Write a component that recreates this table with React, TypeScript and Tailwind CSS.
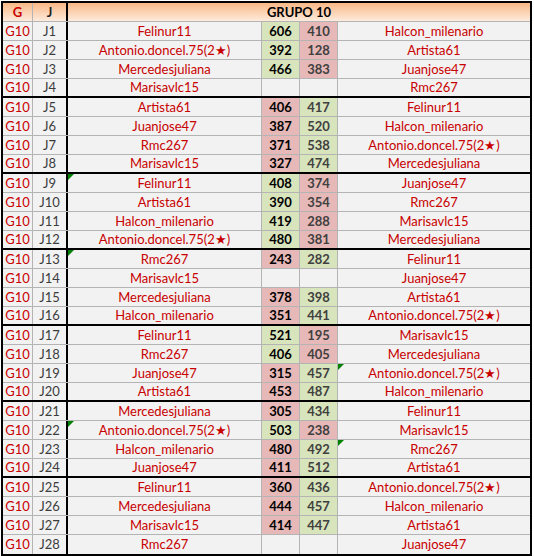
type Row = {
  j: string
  a: string
  s1?: number
  s2?: number
  b: string
  markA?: boolean
  markB?: boolean
}

const rows: Row[] = [
  { j: 'J1', a: 'Felinur11', s1: 606, s2: 410, b: 'Halcon_milenario' },
  { j: 'J2', a: 'Antonio.doncel.75(2★)', s1: 392, s2: 128, b: 'Artista61' },
  { j: 'J3', a: 'Mercedesjuliana', s1: 466, s2: 383, b: 'Juanjose47' },
  { j: 'J4', a: 'Marisavlc15', b: 'Rmc267' },
  { j: 'J5', a: 'Artista61', s1: 406, s2: 417, b: 'Felinur11' },
  { j: 'J6', a: 'Juanjose47', s1: 387, s2: 520, b: 'Halcon_milenario' },
  { j: 'J7', a: 'Rmc267', s1: 371, s2: 538, b: 'Antonio.doncel.75(2★)' },
  { j: 'J8', a: 'Marisavlc15', s1: 327, s2: 474, b: 'Mercedesjuliana' },
  { j: 'J9', a: 'Felinur11', s1: 408, s2: 374, b: 'Juanjose47', markA: true },
  { j: 'J10', a: 'Artista61', s1: 390, s2: 354, b: 'Rmc267' },
  { j: 'J11', a: 'Halcon_milenario', s1: 419, s2: 288, b: 'Marisavlc15' },
  { j: 'J12', a: 'Antonio.doncel.75(2★)', s1: 480, s2: 381, b: 'Mercedesjuliana' },
  { j: 'J13', a: 'Rmc267', s1: 243, s2: 282, b: 'Felinur11', markA: true },
  { j: 'J14', a: 'Marisavlc15', b: 'Juanjose47' },
  { j: 'J15', a: 'Mercedesjuliana', s1: 378, s2: 398, b: 'Artista61' },
  { j: 'J16', a: 'Halcon_milenario', s1: 351, s2: 441, b: 'Antonio.doncel.75(2★)' },
  { j: 'J17', a: 'Felinur11', s1: 521, s2: 195, b: 'Marisavlc15' },
  { j: 'J18', a: 'Rmc267', s1: 406, s2: 405, b: 'Mercedesjuliana' },
  { j: 'J19', a: 'Juanjose47', s1: 315, s2: 457, b: 'Antonio.doncel.75(2★)', markB: true },
  { j: 'J20', a: 'Artista61', s1: 453, s2: 487, b: 'Halcon_milenario' },
  { j: 'J21', a: 'Mercedesjuliana', s1: 305, s2: 434, b: 'Felinur11' },
  { j: 'J22', a: 'Antonio.doncel.75(2★)', s1: 503, s2: 238, b: 'Marisavlc15', markA: true },
  { j: 'J23', a: 'Halcon_milenario', s1: 480, s2: 492, b: 'Rmc267', markB: true },
  { j: 'J24', a: 'Juanjose47', s1: 411, s2: 512, b: 'Artista61' },
  { j: 'J25', a: 'Felinur11', s1: 360, s2: 436, b: 'Antonio.doncel.75(2★)' },
  { j: 'J26', a: 'Mercedesjuliana', s1: 444, s2: 457, b: 'Halcon_milenario' },
  { j: 'J27', a: 'Marisavlc15', s1: 414, s2: 447, b: 'Artista61' },
  { j: 'J28', a: 'Rmc267', b: 'Juanjose47' },
]

function Mark() {
  return (
    <svg className="absolute left-0 top-0" width="6" height="6" viewBox="0 0 6 6">
      <polygon points="0,0 6,0 0,6" fill="#008000" />
    </svg>
  )
}

function scoreBg(mine?: number, other?: number) {
  if (mine === undefined || other === undefined) return 'bg-[#f2f2f2]'
  return mine > other ? 'bg-[#d8e4bc]' : 'bg-[#e6b8b7]'
}

export default function App() {
  return (
    <div className="bg-white w-[534px] h-[556px] pt-px pl-px font-['Lato','Open_Sans',sans-serif] text-[13px] leading-none">
      <div className="w-[531px] border-2 border-black">
        {/* header */}
        <div className="flex h-[19px] border-b border-[#b4b4b4] bg-gradient-to-b from-[#f8b886] to-[#fdebdd] font-bold">
          <div className="w-[30px] border-r border-[#b4b4b4] flex items-center justify-center text-[#c80000]">G</div>
          <div className="w-[35px] border-r-2 border-black flex items-center justify-center text-[#1f1f1f]">J</div>
          <div className="flex-1 flex items-center justify-center text-black">GRUPO 10</div>
        </div>

        {rows.map((r, i) => {
          const groupEnd = i % 4 === 3 && i !== rows.length - 1
          const last = i === rows.length - 1
          return (
            <div
              key={r.j}
              className={
                'flex h-[19px] bg-[#f2f2f2] ' +
                (last ? '' : groupEnd ? 'border-b-2 border-black' : 'border-b border-[#b4b4b4]')
              }
            >
              <div className="w-[30px] border-r border-[#b4b4b4] flex items-center justify-center text-[#c80000]">G10</div>
              <div className="w-[35px] border-r-2 border-black flex items-center justify-center text-[#3c3c3c]">{r.j}</div>
              <div className="relative w-[194px] border-r border-[#b4b4b4] flex items-center justify-center text-[#c80000]">
                {r.markA && <Mark />}
                {r.a}
              </div>
              <div className={'w-[38px] border-r border-[#b4b4b4] flex items-center justify-center font-bold text-black ' + scoreBg(r.s1, r.s2)}>
                {r.s1}
              </div>
              <div className={'w-[38px] border-r border-[#b4b4b4] flex items-center justify-center font-bold text-[#404040] ' + scoreBg(r.s2, r.s1)}>
                {r.s2}
              </div>
              <div className="relative flex-1 flex items-center justify-center text-[#c80000]">
                {r.markB && <Mark />}
                {r.b}
              </div>
            </div>
          )
        })}
      </div>
    </div>
  )
}
